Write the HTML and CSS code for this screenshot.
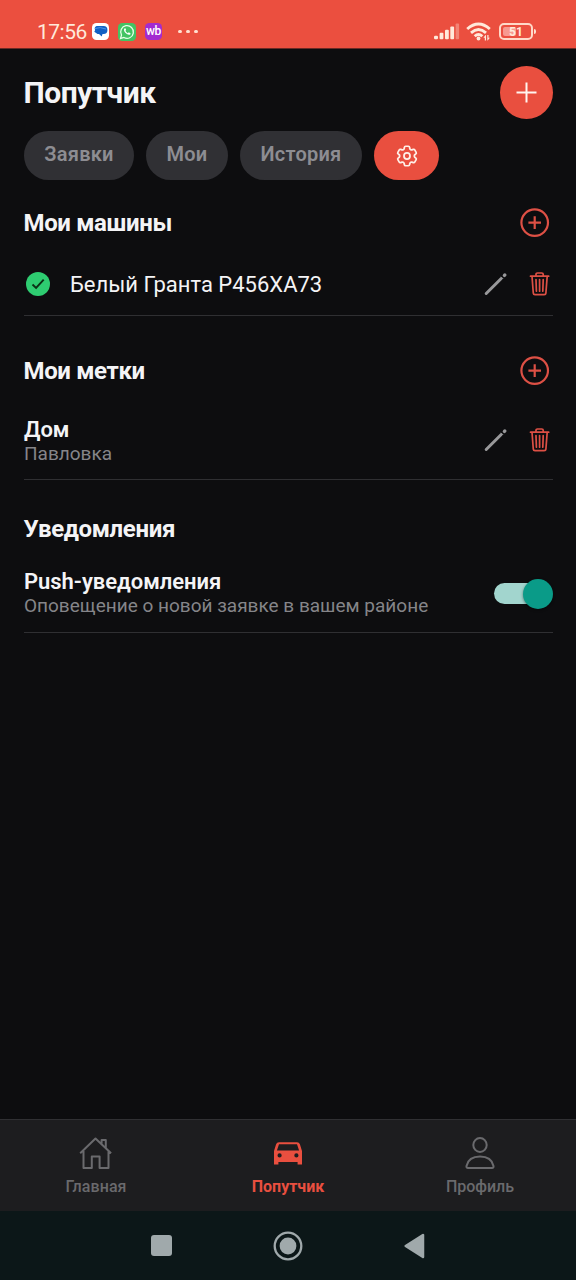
FILE: index.html
```html
<!DOCTYPE html>
<html lang="ru">
<head>
<meta charset="utf-8">
<title>Попутчик</title>
<link rel="stylesheet" href="styles.css">
</head>
<body>
<svg class="defs" width="0" height="0">
  <symbol id="add" viewBox="0 0 30 30"><g fill="none" stroke="currentColor" stroke-width="2.2"><circle cx="14.700" cy="14.600" r="13.300"/><path d="M14.700 8.300v12.600M8.400 14.600H21"/></g></symbol>
  <symbol id="edit" viewBox="0 0 24 24"><path d="M2.200 21.500 17 6.700" stroke="currentColor" stroke-width="3" stroke-linecap="round"/><path d="M17 4.800 19.200 7" stroke="currentColor" stroke-width="1"/><path d="m20.400 3.400.4-.4" stroke="currentColor" stroke-width="3.400" stroke-linecap="round"/></symbol>
  <symbol id="trash" viewBox="0 0 22 26"><g fill="none" stroke="currentColor" stroke-width="1.700" stroke-linecap="round" stroke-linejoin="round"><path d="M1.500 5.200h18.200M3 5.200l1.300 16.900q.1 1.600 1.700 1.600h9.200q1.600 0 1.700-1.600l1.300-16.900M7 5V3.300Q7 2 8.400 2h4.400q1.400 0 1.400 1.300V5M7 8.600l.4 11.600M10.600 8.600v11.600M14.200 8.600l-.4 11.600"/></g></symbol>
</svg>
<div class="screen">
  <div class="status">
    <span class="clock">17:56</span>
    <svg class="app msg" viewBox="0 0 17 17"><rect width="17" height="17" rx="4.500" fill="#fff"/><path d="M5.500 3h6a3.900 3.900 0 0 1 0 7.900h-1l-.8 2.600-2.700-2.600H5.500L2.300 8.800l.9-1.700C1.800 5 3.400 3 5.500 3z" fill="#1260c4"/><path d="M3 5.500Q8 3.500 14 6" stroke="#4b94e8" fill="none"/></svg>
    <svg class="app wa" viewBox="0 0 17 17"><rect width="17" height="17" rx="4" fill="#43c463"/><path d="m2.400 14.600.9-3.200a6 6 0 1 1 2.300 2.300z" fill="none" stroke="#e9ffe9" stroke-width="1.200"/><path d="M6 5.200c-1.600 2.500 2.800 7 5.600 5.600l.2-1.200-1.700-.8-.8.800C8 9 7.300 8 7 7.400l.7-.8L7 5z" fill="#fff"/></svg>
    <span class="app wb">wb</span>
    <span class="dots"><i></i><i></i><i></i></span>
    <svg class="signal" viewBox="0 0 26 17"><g fill="#ffe9da"><rect y="12.700" width="4" height="3.500" rx="1.200"/><rect x="5.600" y="9.800" width="3.800" height="6.400" rx="1"/><rect x="11" y="6.800" width="3.800" height="9.400" rx="1"/><rect x="16.300" y="3.600" width="3.800" height="12.600" rx="1"/><rect x="21.600" y=".5" width="3.500" height="15.700" rx="1" opacity=".35"/></g></svg>
    <svg class="wifi" viewBox="0 0 26 19"><g fill="none" stroke="#ffe9da" stroke-width="2.900"><path d="M1.200 7Q12.500-3 23.800 7M5 10.800Q12.500 4.200 20 10.800M8.700 14.300Q12.500 10.700 16.300 14.300"/></g><circle cx="12.500" cy="16.500" r="1.900" fill="#ffe9da"/><path d="m19.600 13-2.200 2.800h1.400V18.500h1.200V13zM21.700 18.500l2.200-2.800h-1.400V13h-1.200v5.500z" fill="#ffe9da"/></svg>
    <span class="battery"><span class="level"></span><b>51</b></span><span class="cap"></span>
  </div>

  <main>
    <header class="top">
      <h1>Попутчик</h1>
      <button class="plus" aria-label="Добавить"><svg viewBox="0 0 22 22"><path d="M10.500.5v20M.5 10.500h20" stroke="#fff5ef" stroke-width="2"/></svg></button>
    </header>
    <div class="chips">
      <span class="chip c1">Заявки</span>
      <span class="chip c2">Мои</span>
      <span class="chip c3">История</span>
      <span class="chip gear"><svg viewBox="0 0 24 24" fill="none" stroke="#fff0e8" stroke-width="1.600"><path d="M9.594 3.940c.09-.542.56-.94 1.110-.94h2.593c.55 0 1.020.398 1.110.94l.213 1.281c.063.374.313.686.645.87.074.04.147.083.22.127.325.196.72.257 1.075.124l1.217-.456a1.125 1.125 0 0 1 1.370.49l1.296 2.247a1.125 1.125 0 0 1-.26 1.431l-1.003.827c-.293.241-.438.613-.43.992a7.723 7.723 0 0 1 0 .255c-.008.378.137.75.43.991l1.004.827c.424.35.534.955.26 1.430l-1.298 2.247a1.125 1.125 0 0 1-1.369.491l-1.217-.456c-.355-.133-.75-.072-1.076.124a6.470 6.470 0 0 1-.22.128c-.331.183-.581.495-.644.869l-.213 1.281c-.09.543-.56.94-1.110.94h-2.594c-.55 0-1.019-.398-1.110-.94l-.213-1.281c-.062-.374-.312-.686-.644-.87a6.520 6.520 0 0 1-.22-.127c-.325-.196-.72-.257-1.076-.124l-1.217.456a1.125 1.125 0 0 1-1.369-.49l-1.297-2.247a1.125 1.125 0 0 1 .26-1.431l1.004-.827c.292-.24.437-.613.43-.991a6.932 6.932 0 0 1 0-.255c.007-.38-.138-.751-.43-.992l-1.004-.827a1.125 1.125 0 0 1-.26-1.430l1.297-2.247a1.125 1.125 0 0 1 1.370-.491l1.216.456c.356.133.751.072 1.076-.124.072-.044.146-.086.22-.128.332-.183.582-.495.644-.869l.214-1.280z"/><circle cx="12" cy="12" r="2.800"/></svg></span>
    </div>

    <section class="cars">
      <div class="head"><h2 class="h-cars">Мои машины</h2><svg class="add"><use href="#add"/></svg></div>
      <div class="row">
        <svg class="check" viewBox="0 0 24 24"><circle cx="12" cy="12" r="12" fill="#2ecc71"/><path d="m6.500 12.500 3.600 3.500 7.600-8.400" fill="none" stroke="#0b3015" stroke-width="1.900"/></svg>
        <span class="car">Белый Гранта Р456ХА73</span>
        <svg class="edit"><use href="#edit"/></svg><svg class="trash"><use href="#trash"/></svg>
      </div>
    </section>

    <section class="places">
      <div class="head"><h2 class="h-places">Мои метки</h2><svg class="add"><use href="#add"/></svg></div>
      <div class="row">
        <div class="info"><span class="name n-home">Дом</span><span class="sub s-home">Павловка</span></div>
        <svg class="edit"><use href="#edit"/></svg><svg class="trash"><use href="#trash"/></svg>
      </div>
    </section>

    <section class="notify">
      <div class="head"><h2 class="h-notify">Уведомления</h2></div>
      <div class="row">
        <div class="info"><span class="name n-push">Push-уведомления</span><span class="sub s-push">Оповещение о новой заявке в вашем районе</span></div>
        <span class="switch"><i></i></span>
      </div>
    </section>
  </main>

  <nav class="tabs">
    <a class="tab"><svg viewBox="0 0 34 34" fill="none" stroke="currentColor" stroke-width="2" stroke-linejoin="round"><path d="M1.200 17.200 16.500 2.500l15.600 14.700M4.500 15v17h8.300V20.500h7.800V32h8.900V15M22.600 7.600V4h4.200v7.700"/></svg><span class="t1">Главная</span></a>
    <a class="tab on"><svg viewBox="0 0 34 34"><path fill="currentColor" fill-rule="evenodd" d="M8 6.200h18q2.200 0 2.900 2L31 15v13.400h-4.400V26H7.400v2.400H3V15l2.100-6.800q.7-2 2.900-2zM8 8.200 5.900 14.600h22.200L26 8.200zM8.600 17.300a2.100 2.100 0 1 0 0 4.200 2.100 2.100 0 0 0 0-4.200zm16.800 0a2.100 2.100 0 1 0 0 4.200 2.100 2.100 0 0 0 0-4.200z"/></svg><span class="t2">Попутчик</span></a>
    <a class="tab"><svg viewBox="0 0 34 34" fill="none" stroke="currentColor" stroke-width="2"><ellipse cx="17" cy="9" rx="6.700" ry="6.900"/><path d="M5 31.900q-1.900 0-1.500-2C5 23.500 10.500 20.600 17 20.600s12 2.900 13.500 9.300q.4 2-1.500 2z"/></svg><span class="t3">Профиль</span></a>
  </nav>
  <div class="sysnav">
    <span class="recent"></span>
    <svg class="homebtn" viewBox="0 0 30 30"><circle cx="15" cy="15" r="13.300" fill="none" stroke="#a0a9ab" stroke-width="2.300"/><circle cx="15" cy="15" r="8.400" fill="#a0a9ab"/></svg>
    <svg class="back" viewBox="0 0 21 26"><path d="M1.700 13 19 2v22z" fill="#a0a9ab" stroke="#a0a9ab" stroke-width="2.500" stroke-linejoin="round"/></svg>
  </div>
</div>
</body>
</html>
```
FILE: styles.css
```css
* { box-sizing: border-box; }
body { margin: 0; background: #0d0d0f; font-family: Roboto, "Noto Sans", sans-serif; color: #f4f4f6; }
.defs { display: block; position: absolute; }
svg { display: block; flex: none; }
h1, h2 { margin: 0; font-weight: 700; white-space: nowrap; }
.screen { width: 576px; height: 1280px; display: flex; flex-direction: column; }
.status { height: 49px; flex: none; background: #eb4f3f; border-bottom: 1px solid #6b2a24; display: flex; align-items: center; padding: 15px 40px 0 37px; color: #ffe9da; }
.clock { font-size: 21px; line-height: 24px; padding-top: 1px; width: 55px; letter-spacing: -0.5px; }
.app { width: 17px; height: 17px; flex: none; }
.wa { margin-left: 9px; width: 18px; height: 18px; }
.wb { margin-left: 9px; border-radius: 4.5px; background: #a32bd0; color: #fff; font-size: 12px; line-height: 16px; text-align: center; letter-spacing: -0.4px; font-weight: 500; }
.dots { display: flex; gap: 4.5px; margin-left: 16px; }
.dots i { width: 3.5px; height: 3.5px; border-radius: 50%; background: #ffe0d0; }
.signal { width: 26px; height: 17px; margin-left: auto; }
.wifi { width: 26px; height: 19px; margin-left: 6px; }
.battery { position: relative; width: 34px; height: 17px; margin-left: 7px; border: 2px solid #ffd9c8; border-radius: 5px; text-align: center; font-size: 12px; line-height: 14px; }
.battery b { position: relative; }
.level { position: absolute; left: 2px; top: 2px; width: 13px; height: 9px; border-radius: 2px; background: #f79a90; }
.cap { width: 2px; height: 5px; background: #ffe0d0; border-radius: 0 2px 2px 0; margin-left: 1px; }

main { flex: 1; padding: 17px 23px 0 24px; }
.top { display: flex; justify-content: space-between; align-items: center; height: 53px; }
h1 { font-size: 30px; line-height: 36px; letter-spacing: -0.5px; margin-left: -0.5px; }
.plus { width: 53px; height: 53px; border: 0; padding: 0; border-radius: 50%; background: #e94f3f; display: flex; align-items: center; justify-content: center; }
.plus svg { width: 22px; height: 22px; }
.chips { display: flex; gap: 12px; margin-top: 12px; height: 49px; }
.chip { height: 49px; border-radius: 25px; background: #303034; color: #8d8d92; font-size: 20px; line-height: 46px; font-weight: 600; letter-spacing: 0.25px; text-align: center; white-space: nowrap; }
.c1 { width: 110px; }
.c2 { width: 82px; }
.c3 { width: 122px; }
.gear { width: 65px; background: #e94f3f; display: flex; align-items: center; justify-content: center; }
.gear svg { width: 26px; height: 26px; }

.head { display: flex; align-items: center; justify-content: space-between; height: 36px; padding-right: 3px; }
h2 { font-size: 24px; line-height: 30px; letter-spacing: -0.35px; margin-left: -0.5px; }
.add { width: 30px; height: 30px; color: #dd5045; }
.row { display: flex; align-items: center; border-bottom: 1px solid #2f2f32; padding-right: 2px; }
.cars { margin-top: 25px; }
.cars .row { height: 75px; padding-top: 12px; }
.check { width: 24px; height: 24px; margin-left: 2px; }
.car { font-size: 22px; line-height: 28px; padding-top: 2px; margin-left: 20px; white-space: nowrap; }
.edit { width: 24px; height: 24px; color: #98989a; margin-left: auto; }
.trash { width: 22px; height: 26px; color: #dd5045; margin-left: 21px; }
.places { margin-top: 37px; }
.places .row { height: 91px; padding-top: 12px; }
.info { display: flex; flex-direction: column; }
.places .info { padding-top: 2px; }
.name { font-size: 22px; line-height: 25px; font-weight: 600; white-space: nowrap; letter-spacing: -0.03px; }
.sub { font-size: 19px; line-height: 24px; color: #858589; white-space: nowrap; }
.notify { margin-top: 31px; }
.notify .row { height: 86px; padding: 8px 0 0; }
.switch { width: 59px; height: 30px; margin-left: auto; display: flex; align-items: center; position: relative; }
.switch::before { content: ""; width: 45px; height: 21px; border-radius: 11px; background: #a2d5ce; }
.switch i { position: absolute; right: 0; top: 0; width: 30px; height: 30px; border-radius: 50%; background: #0a9b88; box-shadow: 0 1px 3px rgba(0,0,0,.45); }

.tabs { flex: none; height: 92px; background: #1d1d1f; border-top: 1px solid #303033; display: grid; grid-template-columns: repeat(3, 192px); }
.tab { display: flex; flex-direction: column; align-items: center; color: #6a6a6d; font-size: 16px; line-height: 20px; font-weight: 500; padding-top: 16px; }
.tab svg { width: 34px; height: 34px; margin-bottom: 7px; }
.t1 { letter-spacing: 0.1px; }
.tab.on { color: #e94f3f; font-weight: 700; }
.sysnav { flex: none; height: 69px; background: #0c1718; display: flex; align-items: center; padding-left: 151px; }
.recent { width: 21px; height: 21px; border-radius: 3px; background: #a0a9ab; }
.homebtn { width: 30px; height: 30px; margin-left: 101px; }
.back { width: 21px; height: 26px; margin-left: 101px; }
```
